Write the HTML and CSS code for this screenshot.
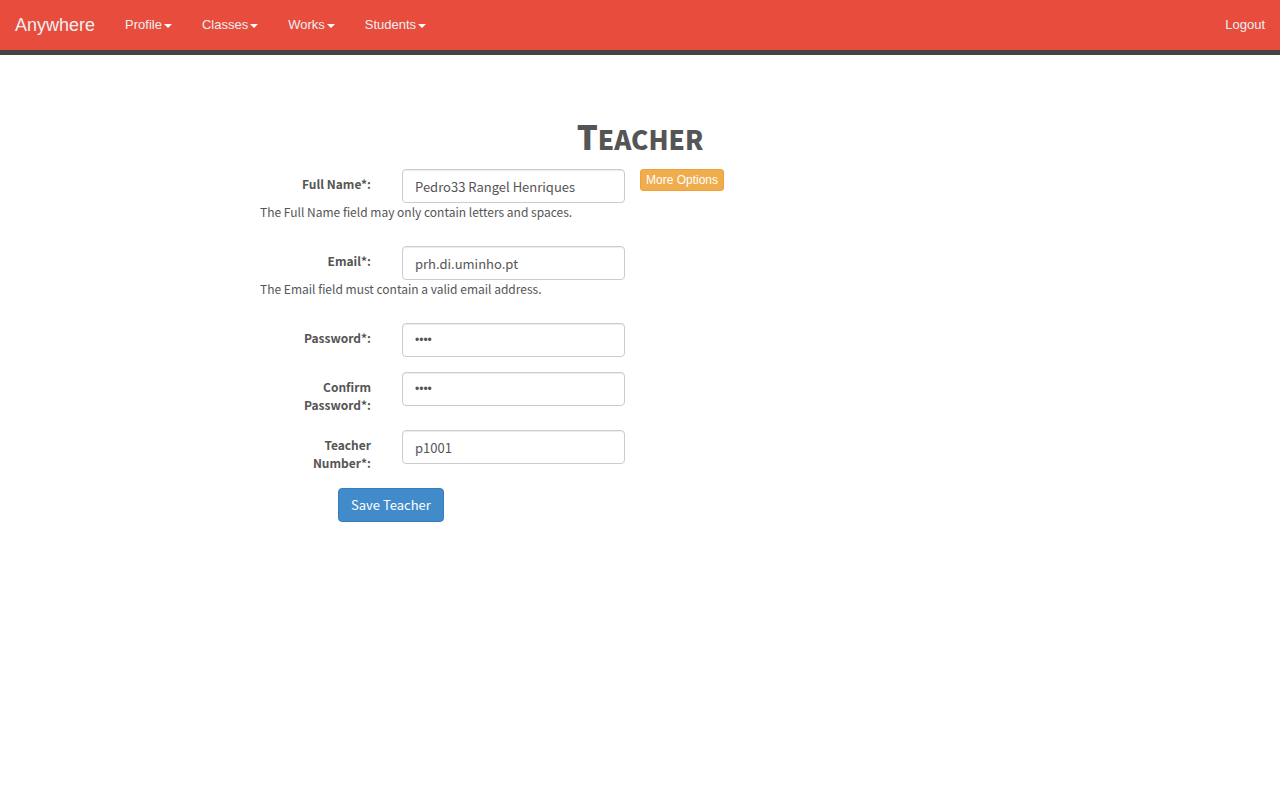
FILE: index.html
```
<!DOCTYPE html>
<html lang="en">
<head>
<meta charset="utf-8">
<title>Teacher</title>
<link rel="stylesheet" href="styles.css">
</head>
<body>
<nav class="navbar">
  <a class="brand" href="#">Anywhere</a>
  <a class="nav-link" href="#">Profile<span class="caret"></span></a>
  <a class="nav-link" href="#">Classes<span class="caret"></span></a>
  <a class="nav-link" href="#">Works<span class="caret"></span></a>
  <a class="nav-link" href="#">Students<span class="caret"></span></a>
  <a class="nav-link logout" href="#">Logout</a>
</nav>
<main class="content">
  <h1 class="title">Teacher</h1>
  <div class="columns">
    <form class="teacher-form">
      <div class="group">
        <label class="label" for="name">Full Name*:</label>
        <input class="field" id="name" type="text" value="Pedro33 Rangel Henriques">
        <p class="message">The Full Name field may only contain letters and spaces.</p>
      </div>
      <div class="group">
        <label class="label" for="email">Email*:</label>
        <input class="field" id="email" type="text" value="prh.di.uminho.pt">
        <p class="message">The Email field must contain a valid email address.</p>
      </div>
      <div class="group">
        <label class="label" for="password">Password*:</label>
        <input class="field secret" id="password" type="password" value="1234">
      </div>
      <div class="group">
        <label class="label" for="confirm">Confirm Password*:</label>
        <input class="field secret" id="confirm" type="password" value="1234">
      </div>
      <div class="group">
        <label class="label" for="number">Teacher Number*:</label>
        <input class="field" id="number" type="text" value="p1001">
      </div>
      <button class="save" type="button">Save Teacher</button>
    </form>
    <div class="side">
      <button class="more" type="button">More Options</button>
    </div>
  </div>
</main>
</body>
</html>
```
FILE: styles.css
```
* {
  box-sizing: border-box;
}

body {
  margin: 0;
  background: #fff;
  color: #555;
  font: 12px/18px "Noto Sans CJK SC", "Noto Sans", sans-serif;
}

.navbar {
  display: flex;
  align-items: center;
  border-bottom: 5px solid #444;
  background: #e84c3d;
  font: 13px/20px "Liberation Sans", Arial, sans-serif;
}

.brand,
.nav-link {
  padding: 15px;
  color: #ecf0f1;
  text-decoration: none;
}

.brand {
  font-size: 18px;
}

.logout {
  margin-left: auto;
}

.caret {
  display: inline-block;
  margin-left: 2px;
  border-top: 4px solid #fff;
  border-left: 4px solid transparent;
  border-right: 4px solid transparent;
  vertical-align: middle;
}

.content {
  width: 62.5%;
  margin: 0 auto;
  padding: 61px 0 40px;
}

.title {
  margin: 0 0 10px;
  font-size: 26px;
  font-weight: 900;
  line-height: 40px;
  text-align: center;
  text-transform: uppercase;
}

.title::first-letter {
  font-size: 33px;
}

.columns {
  display: grid;
  grid-template-columns: 1fr 1fr;
}

.teacher-form {
  padding: 0 15px 0 20px;
}

.group {
  display: grid;
  grid-template-columns: 111px 1fr;
  column-gap: 31px;
  margin-bottom: 15px;
}

.label {
  padding: 6px 0 1px 36px;
  font-weight: 700;
  text-align: right;
}

.field {
  width: 100%;
  height: 34px;
  padding: 6px 12px;
  border: 1px solid #ccc;
  border-radius: 4px;
  background: #fff;
  box-shadow: inset 0 1px 1px rgba(0, 0, 0, 0.075);
  color: #555;
  font: 13px/20px "Noto Sans CJK SC", "Noto Sans", sans-serif;
}

.secret {
  font: 12px/20px "Liberation Sans", Arial, sans-serif;
}

.message {
  grid-column: 1 / -1;
  margin: 0 0 10px;
}

.save,
.more {
  display: block;
  border: 1px solid #357ebd;
  border-radius: 4px;
  background: #428bca;
  color: #fff;
}

.save {
  margin-left: 78px;
  padding: 6px 12px;
  font: 13px/20px "Noto Sans CJK SC", "Noto Sans", sans-serif;
}

.more {
  padding: 1px 5px;
  border-color: #eea236;
  border-radius: 3px;
  background: #f0ad4e;
  font: 12px/18px "Liberation Sans", Arial, sans-serif;
}
```
